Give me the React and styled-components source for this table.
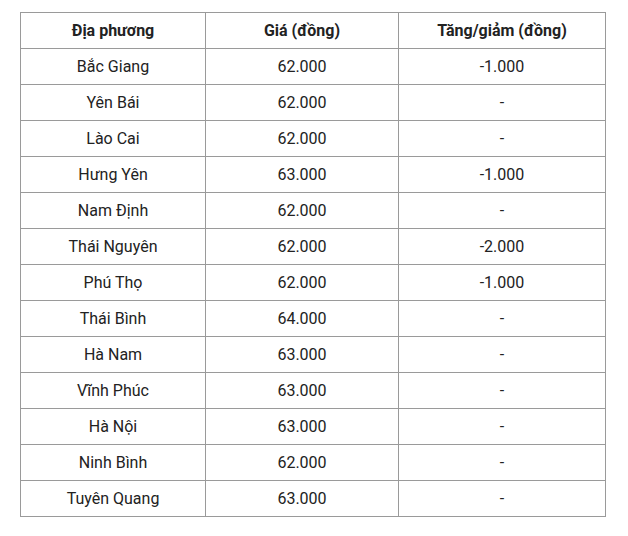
import React from "react";
import styled, { createGlobalStyle } from "styled-components";

const GlobalStyle = createGlobalStyle`
  body {
    margin: 0;
    background: #fff;
    font-family: Roboto, "Liberation Sans", Arial, sans-serif;
  }
`;

const Wrapper = styled.div`
  padding: 12px 0 0 20px;
`;

const PriceTable = styled.table`
  border-collapse: collapse;
  table-layout: fixed;
  width: 585px;
  color: #222;
  font-size: 16px;
`;

const HeadCell = styled.th`
  border: 1px solid #9a9a9a;
  height: 35px;
  padding: 0;
  font-weight: 700;
  text-align: center;
  vertical-align: middle;
`;

const Cell = styled.td`
  border: 1px solid #9a9a9a;
  height: 35px;
  padding: 0;
  text-align: center;
  vertical-align: middle;
`;

const rows = [
  ["Bắc Giang", "62.000", "-1.000"],
  ["Yên Bái", "62.000", "-"],
  ["Lào Cai", "62.000", "-"],
  ["Hưng Yên", "63.000", "-1.000"],
  ["Nam Định", "62.000", "-"],
  ["Thái Nguyên", "62.000", "-2.000"],
  ["Phú Thọ", "62.000", "-1.000"],
  ["Thái Bình", "64.000", "-"],
  ["Hà Nam", "63.000", "-"],
  ["Vĩnh Phúc", "63.000", "-"],
  ["Hà Nội", "63.000", "-"],
  ["Ninh Bình", "62.000", "-"],
  ["Tuyên Quang", "63.000", "-"],
];

const App = () => {
  return (
    <>
      <GlobalStyle />
      <Wrapper>
        <PriceTable>
          <colgroup>
            <col style={{ width: 185 }} />
            <col style={{ width: 193 }} />
            <col style={{ width: 207 }} />
          </colgroup>
          <thead>
            <tr>
              <HeadCell>Địa phương</HeadCell>
              <HeadCell>Giá (đồng)</HeadCell>
              <HeadCell>Tăng/giảm (đồng)</HeadCell>
            </tr>
          </thead>
          <tbody>
            {rows.map(([place, price, change]) => (
              <tr key={place}>
                <Cell>{place}</Cell>
                <Cell>{price}</Cell>
                <Cell>{change}</Cell>
              </tr>
            ))}
          </tbody>
        </PriceTable>
      </Wrapper>
    </>
  );
};

export default App;
